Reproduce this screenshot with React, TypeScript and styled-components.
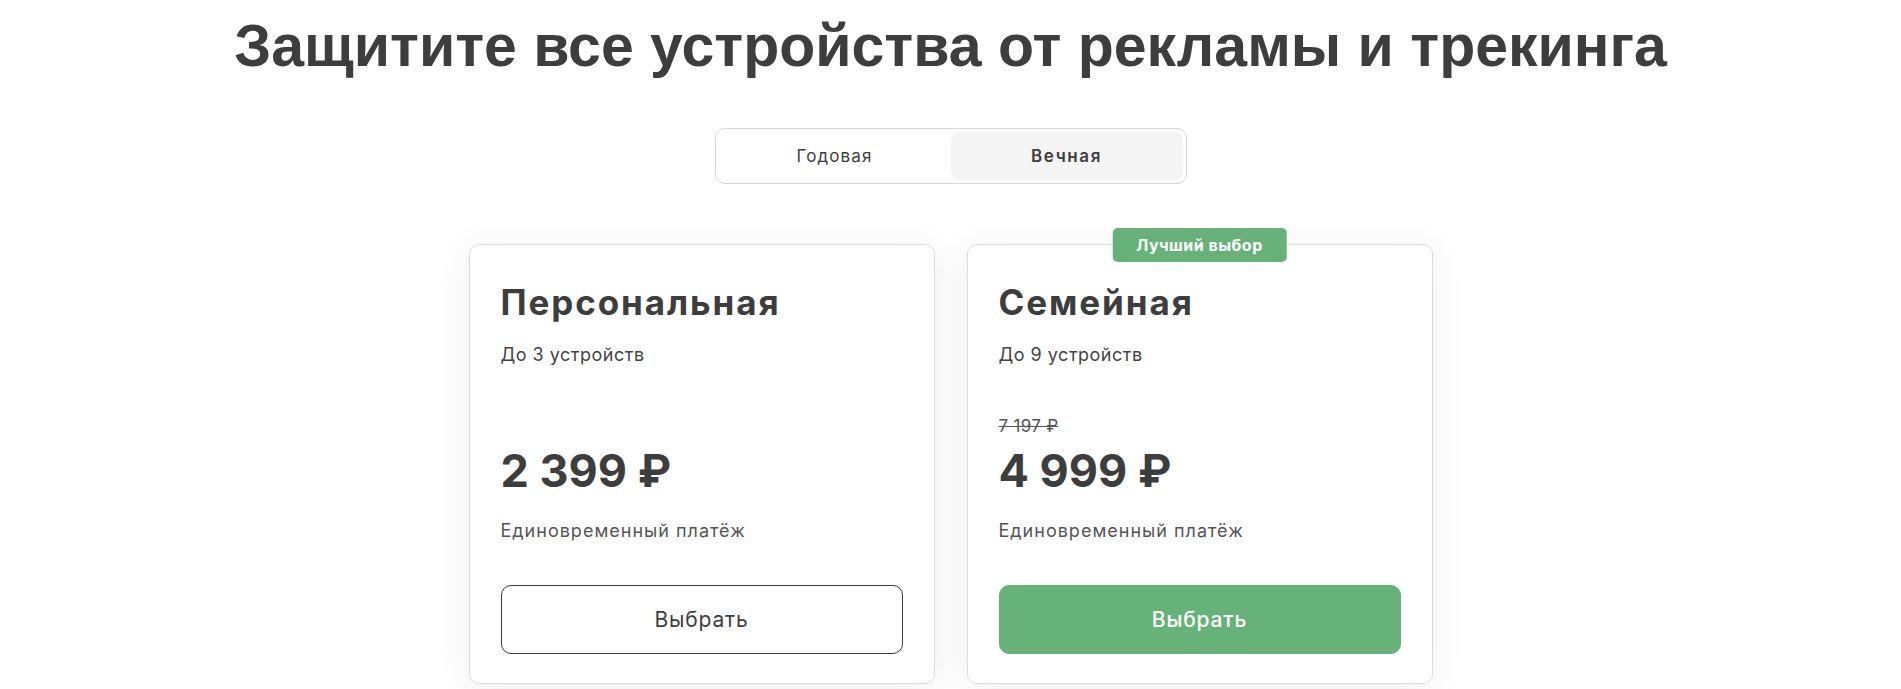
import React, { useState } from "react";
import styled, { createGlobalStyle } from "styled-components";

const GlobalStyle = createGlobalStyle`
  html, body {
    margin: 0;
    padding: 0;
    background: #ffffff;
  }
  body {
    font-family: Inter, "Noto Sans", sans-serif;
    color: #3d3d3d;
  }
  * { box-sizing: border-box; }
`;

const Page = styled.main`
  display: flex;
  flex-direction: column;
  align-items: center;
  padding-top: 10px;
  min-height: 689px;
  overflow: hidden;
`;

const Title = styled.h1`
  margin: 0;
  font-family: "Liberation Sans", Arial, sans-serif;
  font-weight: 700;
  font-size: 59px;
  line-height: 72px;
  color: #3d3d3d;
  text-align: center;
  white-space: nowrap;
`;

const Toggle = styled.div`
  margin-top: 46px;
  width: 472px;
  height: 56px;
  padding: 3px;
  border: 1px solid #d6d6d6;
  border-radius: 10px;
  display: grid;
  grid-template-columns: 1fr 1fr;
  background: #fff;
`;

const ToggleOption = styled.button<{ $active?: boolean }>`
  border: none;
  margin: 0;
  padding: 0;
  border-radius: 8px;
  background: ${(p) => (p.$active ? "#f4f4f4" : "transparent")};
  font-family: Inter, "Noto Sans", sans-serif;
  font-size: 17px;
  letter-spacing: ${(p) => (p.$active ? "1.6px" : "1.1px")};
  font-weight: ${(p) => (p.$active ? 600 : 400)};
  color: #3d3d3d;
  cursor: pointer;
`;

const Cards = styled.div`
  margin-top: 60px;
  display: grid;
  grid-template-columns: 466px 466px;
  gap: 32px;
`;

const Card = styled.section`
  position: relative;
  background: #fff;
  border: 1px solid #dcdcdc;
  border-radius: 10px;
  box-shadow: 0 4px 36px rgba(0, 0, 0, 0.07);
  padding: 37px 31px 29px;
  display: flex;
  flex-direction: column;
`;

const Badge = styled.div`
  position: absolute;
  top: 0;
  left: 50%;
  transform: translate(-50%, -50%);
  height: 34px;
  padding: 0 24px;
  display: flex;
  align-items: center;
  background: #67b279;
  color: #fff;
  border-radius: 5px;
  font-size: 16px;
  letter-spacing: 0.5px;
  font-weight: 700;
  white-space: nowrap;
`;

const PlanName = styled.h2`
  margin: 0;
  font-size: 35px;
  line-height: 40px;
  font-weight: 700;
  color: #3d3d3d;
  letter-spacing: 1.9px;
`;

const Devices = styled.p`
  margin: 21px 0 0;
  font-size: 18px;
  letter-spacing: 0.5px;
  line-height: 24px;
  color: #444;
`;

const OldPrice = styled.div`
  margin-top: 47px;
  height: 24px;
  font-size: 17px;
  letter-spacing: 0.3px;
  line-height: 24px;
  color: #555;
  text-decoration: line-through;
`;

const Price = styled.div`
  margin-top: 5px;
  font-size: 45px;
  line-height: 56px;
  font-weight: 700;
  color: #3d3d3d;
`;

const PaymentNote = styled.p`
  margin: 20px 0 0;
  font-size: 18px;
  letter-spacing: 1px;
  line-height: 24px;
  color: #555;
`;

const SelectButton = styled.button<{ $primary?: boolean }>`
  margin-top: 42px;
  height: 69px;
  width: 100%;
  border-radius: 10px;
  font-family: Inter, "Noto Sans", sans-serif;
  font-size: 21px;
  letter-spacing: 0.8px;
  font-weight: ${(p) => (p.$primary ? 500 : 400)};
  cursor: pointer;
  border: 1px solid ${(p) => (p.$primary ? "#67b279" : "#3d3d3d")};
  background: ${(p) => (p.$primary ? "#67b279" : "#fff")};
  color: ${(p) => (p.$primary ? "#fff" : "#3d3d3d")};
`;

type Plan = {
  name: string;
  devices: string;
  oldPrice?: string;
  price: string;
  badge?: string;
  primary?: boolean;
};

const plans: Plan[] = [
  { name: "Персональная", devices: "До 3 устройств", price: "2 399 ₽" },
  {
    name: "Семейная",
    devices: "До 9 устройств",
    oldPrice: "7 197 ₽",
    price: "4 999 ₽",
    badge: "Лучший выбор",
    primary: true,
  },
];

export default function App() {
  const [period, setPeriod] = useState<"year" | "forever">("forever");
  return (
    <>
      <GlobalStyle />
      <Page>
        <Title>Защитите все устройства от рекламы и трекинга</Title>
        <Toggle>
          <ToggleOption $active={period === "year"} onClick={() => setPeriod("year")}>
            Годовая
          </ToggleOption>
          <ToggleOption $active={period === "forever"} onClick={() => setPeriod("forever")}>
            Вечная
          </ToggleOption>
        </Toggle>
        <Cards>
          {plans.map((p) => (
            <Card key={p.name}>
              {p.badge && <Badge>{p.badge}</Badge>}
              <PlanName>{p.name}</PlanName>
              <Devices>{p.devices}</Devices>
              <OldPrice>{p.oldPrice ?? ""}</OldPrice>
              <Price>{p.price}</Price>
              <PaymentNote>Единовременный платёж</PaymentNote>
              <SelectButton $primary={p.primary}>Выбрать</SelectButton>
            </Card>
          ))}
        </Cards>
      </Page>
    </>
  );
}
